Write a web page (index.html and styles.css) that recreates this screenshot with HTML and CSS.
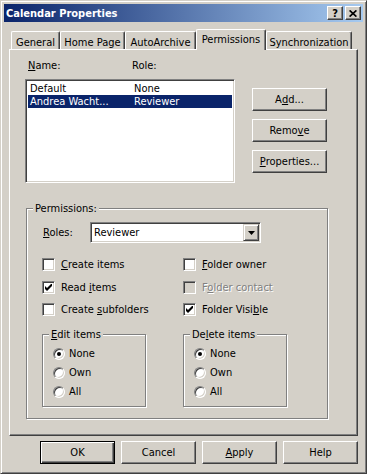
FILE: index.html
```html
<!DOCTYPE html>
<html lang="en">
  <head>
    <meta charset="UTF-8" />
    <meta name="viewport" content="width=device-width, initial-scale=1.0" />
    <title>Calendar Properties</title>
    <link rel="stylesheet" href="styles.css">
  </head>
  <body>
    <div class="window">
      <!-- Title bar -->
      <div class="titlebar">
        <span class="title">Calendar Properties</span>
        <div class="caption-buttons">
          <div class="caption-btn">?</div>
          <div class="caption-btn">
            <svg width="8" height="7" viewBox="0 0 8 7"><path d="M0.6 0.4l6.8 6.2M7.4 0.4L0.6 6.6" stroke="#000" stroke-width="1.7" fill="none"/></svg>
          </div>
        </div>
      </div>

      <div class="dialog-body">
        <!-- Tabs -->
        <div class="tabs">
          <div class="tab tab-general">General</div>
          <div class="tab tab-home">Home Page</div>
          <div class="tab tab-archive">AutoArchive</div>
          <div class="tab tab-perms selected">Permissions</div>
          <div class="tab tab-sync">Synchronization</div>
        </div>

        <div class="tab-panel">
          <div class="top-row">
            <div class="list-area">
              <div class="list-head">
                <span class="col-name"><u>N</u>ame:</span>
                <span>Role:</span>
              </div>
              <div class="listbox">
                <div class="list-row">
                  <span class="col-name">Default</span>
                  <span>None</span>
                </div>
                <div class="list-row selected">
                  <span class="col-name">Andrea Wacht...</span>
                  <span>Reviewer</span>
                </div>
              </div>
            </div>
            <div class="side-buttons">
              <div class="btn">A<u>d</u>d...</div>
              <div class="btn">Remo<u>v</u>e</div>
              <div class="btn"><u>P</u>roperties...</div>
            </div>
          </div>

          <!-- Permissions group -->
          <div class="group perms">
            <div class="legend">Permissions:</div>

            <div class="roles-row">
              <span class="roles-label"><u>R</u>oles:</span>
              <div class="dropdown">
                <span class="dropdown-value">Reviewer</span>
                <div class="dropdown-arrow">
                  <svg width="7" height="4" viewBox="0 0 7 4"><path d="M0 0h7L3.5 4z" fill="#000"/></svg>
                </div>
              </div>
            </div>

            <div class="check-grid">
              <div class="check-item">
                <div class="checkbox"></div>
                <span><u>C</u>reate items</span>
              </div>
              <div class="check-item">
                <div class="checkbox"></div>
                <span><u>F</u>older owner</span>
              </div>
              <div class="check-item">
                <div class="checkbox">
                  <svg width="7" height="7" viewBox="0 0 7 7"><path d="M0 2l2 2 4-4h1v2l-5 5-2-2z" fill="#000"/></svg>
                </div>
                <span>Read <u>i</u>tems</span>
              </div>
              <div class="check-item disabled">
                <div class="checkbox"></div>
                <span>F<u>o</u>lder contact</span>
              </div>
              <div class="check-item">
                <div class="checkbox"></div>
                <span>Create <u>s</u>ubfolders</span>
              </div>
              <div class="check-item">
                <div class="checkbox">
                  <svg width="7" height="7" viewBox="0 0 7 7"><path d="M0 2l2 2 4-4h1v2l-5 5-2-2z" fill="#000"/></svg>
                </div>
                <span>Folder Visi<u>b</u>le</span>
              </div>
            </div>

            <div class="sub-groups">
              <div class="group sub">
                <div class="legend"><u>E</u>dit items</div>
                <div class="radio-list">
                  <div class="radio-item"><div class="radio on"></div><span>None</span></div>
                  <div class="radio-item"><div class="radio"></div><span>Own</span></div>
                  <div class="radio-item"><div class="radio"></div><span>All</span></div>
                </div>
              </div>
              <div class="group sub">
                <div class="legend">De<u>l</u>ete items</div>
                <div class="radio-list">
                  <div class="radio-item"><div class="radio on"></div><span>None</span></div>
                  <div class="radio-item"><div class="radio"></div><span>Own</span></div>
                  <div class="radio-item"><div class="radio"></div><span>All</span></div>
                </div>
              </div>
            </div>
          </div>
        </div>

        <!-- Dialog buttons -->
        <div class="footer">
          <div class="btn default">OK</div>
          <div class="btn">Cancel</div>
          <div class="btn"><u>A</u>pply</div>
          <div class="btn">Help</div>
        </div>
      </div>
    </div>
  </body>
</html>
```

FILE: styles.css
```css
* {
  box-sizing: border-box;
}

body {
  margin: 0;
  background: #d4d0c8;
  font-family: "DejaVu Sans Condensed", "DejaVu Sans", sans-serif;
  font-size: 11px;
  line-height: 13px;
  color: #000;
}

u {
  text-decoration: underline;
  text-underline-offset: 1px;
}

.window {
  width: 367px;
  height: 474px;
  padding: 3px;
  background: #d4d0c8;
  border: 1px solid;
  border-color: #d4d0c8 #404040 #404040 #d4d0c8;
  box-shadow: inset 1px 1px 0 #fff, inset -1px -1px 0 #808080;
}

/* title bar */
.titlebar {
  height: 18px;
  display: flex;
  align-items: center;
  justify-content: space-between;
  padding: 0 2px;
  background: linear-gradient(to right, #0a246a, #a6caf0);
}

.title {
  color: #fff;
  font-weight: bold;
}

.caption-buttons {
  display: flex;
  gap: 2px;
}

.caption-btn {
  width: 16px;
  height: 14px;
  display: flex;
  align-items: center;
  justify-content: center;
  font-weight: bold;
  background: #d4d0c8;
  border: 1px solid;
  border-color: #fff #404040 #404040 #fff;
  box-shadow: inset -1px -1px 0 #808080;
}

.dialog-body {
  padding: 7px 5px 0;
}

/* tabs */
.tabs {
  display: flex;
  align-items: flex-end;
  height: 20px;
  padding-left: 2px;
}

.tab {
  height: 18px;
  padding-top: 4px;
  text-align: center;
  white-space: nowrap;
  background: #d4d0c8;
  border: 1px solid #fff;
  border-bottom: 0;
  border-right-color: #404040;
  border-radius: 2px 2px 0 0;
  box-shadow: inset -1px 0 0 #808080;
}

.tab-general { width: 49px; }
.tab-home { width: 65px; }
.tab-archive { width: 71px; }
.tab-perms { width: 70px; }
.tab-sync { width: 86px; }

.tab.selected {
  height: 21px;
  padding-top: 3px;
  margin-bottom: -1px;
  position: relative;
  z-index: 1;
}

.tab-panel {
  height: 387px;
  padding: 9px 0 0 15px;
  border: 1px solid;
  border-color: #fff #404040 #404040 #fff;
  box-shadow: inset -1px -1px 0 #808080;
}

/* name / role list */
.top-row {
  display: flex;
}

.list-head {
  display: flex;
  padding-left: 3px;
  margin-bottom: 7px;
}

.col-name {
  width: 104px;
}

.listbox {
  width: 210px;
  height: 104px;
  padding: 2px;
  background: #fff;
  border: 1px solid;
  border-color: #808080 #fff #fff #808080;
  box-shadow: inset 1px 1px 0 #404040, inset -1px -1px 0 #d4d0c8;
}

.list-row {
  display: flex;
  height: 13px;
  padding-left: 2px;
  white-space: nowrap;
}

.list-row.selected {
  background: #0a246a;
  color: #fff;
}

.side-buttons {
  display: flex;
  flex-direction: column;
  gap: 8px;
  margin: 29px 0 0 17px;
}

.btn {
  width: 75px;
  height: 23px;
  display: flex;
  align-items: center;
  justify-content: center;
  background: #d4d0c8;
  border: 1px solid;
  border-color: #fff #404040 #404040 #fff;
  box-shadow: inset -1px -1px 0 #808080;
}

.btn.default {
  border-color: #000;
  box-shadow: inset 1px 1px 0 #fff, inset -1px -1px 0 #404040, inset -2px -2px 0 #808080;
}

/* etched group boxes */
.group {
  border: 1px solid #808080;
  box-shadow: inset 1px 1px 0 #fff, 1px 1px 0 #fff;
}

.legend {
  width: fit-content;
  margin: -7px 0 0 6px;
  padding: 0 2px;
  background: #d4d0c8;
}

.perms {
  width: 302px;
  margin: 25px 0 0 1px;
  padding-bottom: 11px;
}

.roles-row {
  display: flex;
  align-items: center;
  margin-top: 7px;
  padding-left: 16px;
}

.roles-label {
  width: 47px;
}

.dropdown {
  width: 171px;
  height: 21px;
  display: flex;
  padding: 1px;
  background: #fff;
  border: 1px solid;
  border-color: #808080 #fff #fff #808080;
  box-shadow: inset 1px 1px 0 #404040, inset -1px -1px 0 #d4d0c8;
}

.dropdown-value {
  flex: 1;
  padding: 2px 0 0 2px;
}

.dropdown-arrow {
  width: 16px;
  height: 17px;
  display: flex;
  align-items: center;
  justify-content: center;
  background: #d4d0c8;
  border: 1px solid;
  border-color: #d4d0c8 #404040 #404040 #d4d0c8;
  box-shadow: inset 1px 1px 0 #fff, inset -1px -1px 0 #808080;
}

/* checkboxes */
.check-grid {
  display: grid;
  grid-template-columns: 141px 1fr;
  grid-template-rows: 23px 22px 13px;
  margin-top: 15px;
  padding-left: 15px;
}

.check-item {
  display: flex;
  align-items: flex-start;
  gap: 6px;
  white-space: nowrap;
}

.checkbox {
  width: 13px;
  height: 13px;
  display: flex;
  align-items: center;
  justify-content: center;
  background: #fff;
  border: 1px solid;
  border-color: #808080 #fff #fff #808080;
  box-shadow: inset 1px 1px 0 #404040, inset -1px -1px 0 #d4d0c8;
}

.check-item.disabled {
  color: #808080;
  text-shadow: 1px 1px 0 #fff;
}

.check-item.disabled .checkbox {
  background: #d4d0c8;
}

/* radio groups */
.sub-groups {
  display: flex;
  gap: 37px;
  margin-top: 18px;
  padding-left: 15px;
}

.sub {
  width: 104px;
  padding-bottom: 8px;
}

.radio-list {
  display: flex;
  flex-direction: column;
  gap: 6px;
  margin-top: 6px;
  padding-left: 10px;
}

.radio-item {
  display: flex;
  align-items: center;
  gap: 4px;
  height: 13px;
}

.radio {
  width: 12px;
  height: 12px;
  display: flex;
  align-items: center;
  justify-content: center;
  border-radius: 50%;
  background: #fff;
  border: 1px solid;
  border-color: #808080 #fff #fff #808080;
  box-shadow: inset 1px 1px 0 #404040, inset -1px -1px 0 #d4d0c8;
}

.radio.on::after {
  content: "";
  width: 4px;
  height: 4px;
  border-radius: 50%;
  background: #000;
}

/* bottom buttons */
.footer {
  display: flex;
  justify-content: flex-end;
  gap: 6px;
  margin-top: 5px;
}
```
